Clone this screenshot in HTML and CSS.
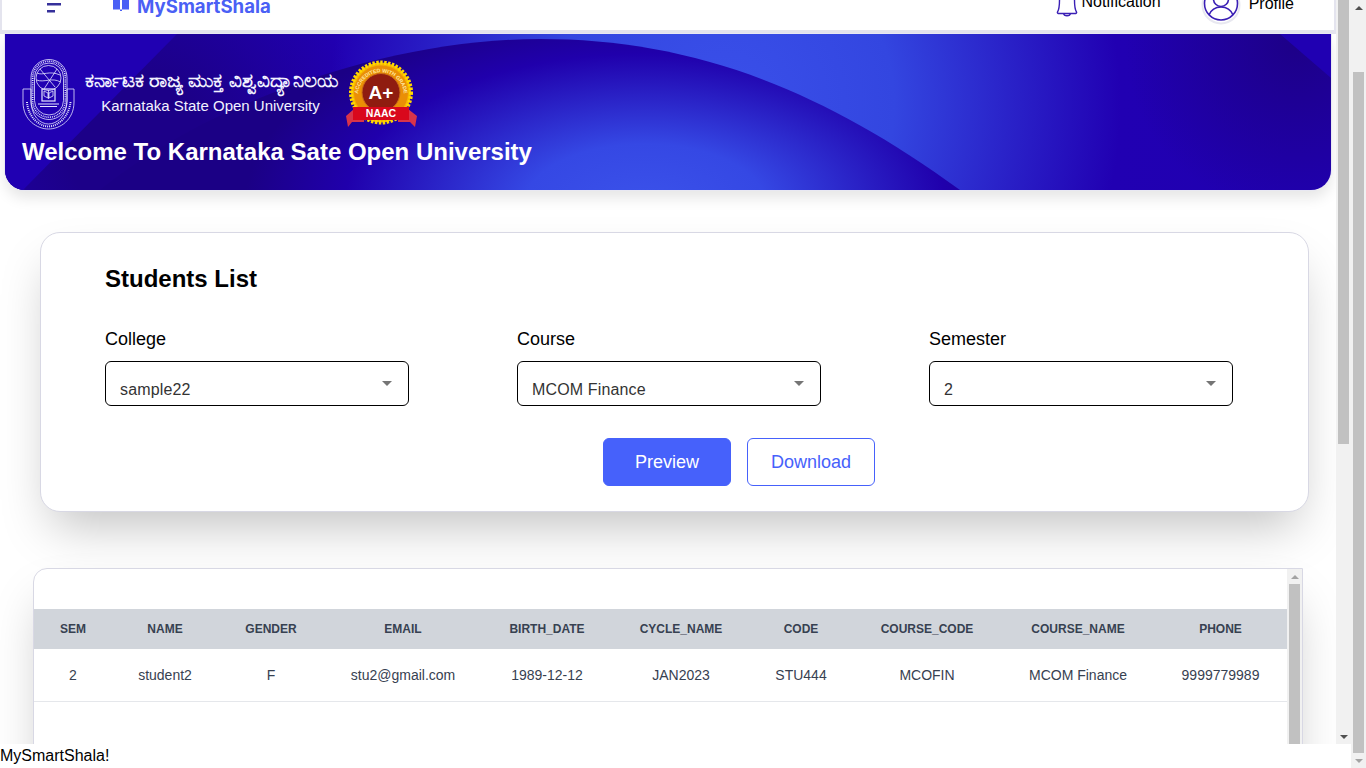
FILE: index.html
```html
<!DOCTYPE html>
<html>
<head>
    <meta charset="utf-8">
    <meta name="viewport" content="width=device-width, initial-scale=1">
    <title>MySmartShala</title>
    <link rel="stylesheet" href="styles.css">
</head>
<body>

<div class="page">
    <div class="main">
        <div class="content">

            <div class="topbar">
                <div class="topbar-left">
                    <svg class="menu-icon" width="14" height="13" viewBox="0 0 14 13">
                        <rect x="0" y="3" width="14" height="2.5" fill="#35309a"/>
                        <rect x="0" y="10" width="8" height="2.5" fill="#35309a"/>
                    </svg>
                    <svg class="book-icon" width="16" height="12" viewBox="0 0 16 12">
                        <path d="M0 0h7v10.500H0zM9 0h7v10.500H9zM7 10.500h2V12H7z" fill="#4a60f5"/>
                    </svg>
                    <span class="brand">MySmartShala</span>
                </div>
                <div class="topbar-right">
                    <svg class="bell-icon" width="22" height="29" viewBox="0 0 22 29">
                        <path d="M11 -6C5 -6 3.500 4 3.500 12C3.500 18 3.500 21 1.500 24C1 25 2 25.500 3 25.500H19C20 25.500 21 25 20.500 24C18.500 21 18.500 18 18.500 12C18.500 4 17 -6 11 -6ZM7.500 25.500C8 28.500 14 28.500 14.500 25.500" stroke="#3a1fb5" stroke-width="1.4" fill="none"/>
                    </svg>
                    <span class="top-link notif">Notification</span>
                    <svg class="user-icon" width="40" height="40" viewBox="0 0 40 40">
                        <circle cx="20" cy="20" r="18.500" fill="#fff" stroke="#e8e8f0" stroke-width="2"/>
                        <circle cx="20" cy="18.500" r="16.500" fill="none" stroke="#3a1fb5" stroke-width="1.6"/>
                        <circle cx="20" cy="14" r="7.500" fill="none" stroke="#3a1fb5" stroke-width="1.6"/>
                        <path d="M8 30C10 25 14 22 20 22C26 22 30 25 32 30" fill="none" stroke="#3a1fb5" stroke-width="1.6"/>
                    </svg>
                    <span class="top-link">Profile</span>
                </div>
            </div>

            <div class="banner">
                <!-- background swirl -->
                <svg class="banner-bg" width="1326" height="156" viewBox="0 0 1326 156" preserveAspectRatio="none">
                    <defs>
                        <radialGradient id="glow" gradientUnits="userSpaceOnUse" cx="720" cy="70" r="565">
                            <stop offset="0" stop-color="#3a50ea"/>
                            <stop offset="0.3" stop-color="#3346e0"/>
                            <stop offset="0.7" stop-color="#2100b2"/>
                            <stop offset="1" stop-color="#2000b0"/>
                        </radialGradient>
                        <radialGradient id="shade-right" gradientUnits="userSpaceOnUse" cx="1290" cy="10" r="170">
                            <stop offset="0" stop-color="#1d0088"/>
                            <stop offset="1" stop-color="#1d0088" stop-opacity="0"/>
                        </radialGradient>
                        <radialGradient id="shade-left" gradientUnits="userSpaceOnUse" cx="130" cy="110" r="230">
                            <stop offset="0.3" stop-color="#1c0088"/>
                            <stop offset="1" stop-color="#1c0088" stop-opacity="0"/>
                        </radialGradient>
                        <radialGradient id="dome" gradientUnits="userSpaceOnUse" cx="0" cy="0" r="400" gradientTransform="translate(640 170) scale(1 0.5)">
                            <stop offset="0" stop-color="#3b52ea"/>
                            <stop offset="0.3" stop-color="#3548e4"/>
                            <stop offset="0.75" stop-color="#2000ac"/>
                            <stop offset="1" stop-color="#1b0085"/>
                        </radialGradient>
                    </defs>
                    <rect width="1326" height="156" fill="url(#glow)"/>
                    <rect width="1326" height="156" fill="url(#shade-right)"/>
                    <rect width="500" height="156" fill="url(#shade-left)"/>
                    <path d="M0 0H172L18 156H0Z" fill="#2000b2"/>
                    <path d="M1275 0H1326V44Z" fill="#2000b2"/>
                    <path d="M95 156C200 70 380 5 535 5C680 5 810 50 955 156Z" fill="url(#dome)"/>
                </svg>

                <div class="logo-row">
                    <svg class="crest" width="53" height="72" viewBox="0 0 53 72">
                        <g fill="none" stroke="#e4e5ff" stroke-width="0.8">
                            <rect x="9" y="1.500" width="36" height="60" rx="18"/>
                            <rect x="12.500" y="5" width="29" height="52" rx="14.500"/>
                            <rect x="10.700" y="3.200" width="32.600" height="56" rx="16.300" stroke-width="1.600" stroke-dasharray="0.9 1"/>
                            <circle cx="26.500" cy="20" r="12.500"/>
                            <path d="M15 15C21 18 27 12 38 17M14.500 22C22 25 30 19 38.500 24M18 11L33 29M35 11L22 31"/>
                            <path d="M1 31H9V42C9 58 18 66 26.500 66C35 66 45 58 45 42V31H52V44C52 62 38 71 26.500 71C15 71 1 62 1 44Z"/>
                            <path d="M5 44C6 58 16 68 26.500 68.500C37 68 47 58 48.500 44" stroke-width="2" stroke-dasharray="1 1"/>
                            <rect x="20" y="31" width="13" height="12" stroke-width="1.200"/>
                            <path d="M26.500 32V41M22 33L26 35V40L22 38ZM31 33L27 35V40L31 38Z"/>
                            <path d="M16 46H37M18 48.500H35" stroke-width="1.200"/>
                        </g>
                    </svg>
                    <div class="logo-text">
                        <div class="logo-kn">ಕರ್ನಾಟಕ ರಾಜ್ಯ ಮುಕ್ತ ವಿಶ್ವವಿದ್ಯಾನಿಲಯ</div>
                        <div class="logo-en">Karnataka State Open University</div>
                    </div>
                    <svg class="naac" width="71" height="67" viewBox="0 0 71 67">
                        <defs>
                            <path id="naac-arc" d="M13 42A23 23 0 1 1 57 42"/>
                        </defs>
                        <path d="M0 56L8 49H18V62L6 62L2 67Z" fill="#d8344a"/>
                        <path d="M71 56L62 49H52V62L64 62L69 67Z" fill="#d8344a"/>
                        <circle cx="35" cy="32.500" r="30" fill="#f6b400" stroke="#ffd800" stroke-width="4" stroke-dasharray="2.400 1.500"/>
                        <circle cx="35" cy="32.500" r="27" fill="#ea8f06"/>
                        <circle cx="35" cy="32.500" r="19" fill="#8f1c10" stroke="#c86a18"/>
                        <text class="naac-arc-text" fill="#ffe9a0"><textPath href="#naac-arc" startOffset="50%" text-anchor="middle">ACCREDITED WITH GRADE</textPath></text>
                        <text class="naac-grade" x="35" y="39" text-anchor="middle" fill="#fff">A+</text>
                        <rect x="7" y="47" width="56" height="13" fill="#d9081c"/>
                        <text class="naac-name" x="35" y="57" text-anchor="middle" fill="#fff">NAAC</text>
                    </svg>
                </div>
                <h1 class="welcome">Welcome To Karnataka Sate Open University</h1>
            </div>

            <div class="filter-card">
                <h2 class="card-title">Students List</h2>
                <div class="filters">
                    <div class="field">
                        <label class="field-label">College</label>
                        <div class="select-box"><span>sample22</span><i class="caret"></i></div>
                    </div>
                    <div class="field">
                        <label class="field-label">Course</label>
                        <div class="select-box"><span>MCOM Finance</span><i class="caret"></i></div>
                    </div>
                    <div class="field">
                        <label class="field-label">Semester</label>
                        <div class="select-box"><span>2</span><i class="caret"></i></div>
                    </div>
                </div>
                <div class="actions">
                    <button class="btn btn-primary">Preview</button>
                    <button class="btn btn-outline">Download</button>
                </div>
            </div>

            <div class="table-card">
                <div class="table-wrap">
                    <table>
                        <colgroup>
                            <col class="c-sem"><col class="c-name"><col class="c-gender"><col class="c-email"><col class="c-birth">
                            <col class="c-cycle"><col class="c-code"><col class="c-ccode"><col class="c-cname"><col class="c-phone">
                        </colgroup>
                        <thead>
                            <tr>
                                <th>SEM</th><th>NAME</th><th>GENDER</th><th>EMAIL</th><th>BIRTH_DATE</th>
                                <th>CYCLE_NAME</th><th>CODE</th><th>COURSE_CODE</th><th>COURSE_NAME</th><th>PHONE</th>
                            </tr>
                        </thead>
                        <tbody>
                            <tr>
                                <td>2</td><td>student2</td><td>F</td><td>stu2@gmail.com</td><td>1989-12-12</td>
                                <td>JAN2023</td><td>STU444</td><td>MCOFIN</td><td>MCOM Finance</td><td>9999779989</td>
                            </tr>
                        </tbody>
                    </table>
                </div>
                <div class="sb sb-table">
                    <div class="sb-btn"><i class="arrow-up off"></i></div>
                    <div class="thumb thumb-fill"></div>
                </div>
            </div>

        </div>

        <div class="sb sb-inner">
            <div class="thumb thumb-inner"></div>
            <div class="sb-space"></div>
            <div class="sb-btn"><i class="arrow-down"></i></div>
        </div>
    </div>

    <div class="footer">MySmartShala!</div>
</div>

<div class="sb sb-outer">
    <div class="sb-btn"><i class="arrow-up"></i></div>
    <div class="thumb thumb-outer"></div>
    <div class="sb-btn"><i class="arrow-down off"></i></div>
</div>

</body>
</html>
```

FILE: styles.css
```css
* {
    box-sizing: border-box;
}

body {
    margin: 0;
    height: 100vh;
    overflow: hidden;
    display: flex;
    background-color: #fff;
    font-family: "Liberation Sans", Arial, sans-serif;
    color: #000;
}

.page {
    width: 1351px;
    display: flex;
    flex-direction: column;
}

.main {
    height: 744px;
    display: flex;
    overflow: hidden;
}

.content {
    width: 1336px;
    overflow: hidden;
}

.footer {
    height: 24px;
    font-size: 16px;
    line-height: 23px;
    background-color: #fff;
}

/* fake browser scrollbars */
.sb {
    width: 15px;
    flex: none;
    display: flex;
    flex-direction: column;
    align-items: center;
    background-color: #f1f1f1;
}

.sb-btn {
    width: 15px;
    height: 15px;
    flex: none;
    display: flex;
    justify-content: center;
    align-items: center;
}

.sb-space {
    flex: 1;
}

.thumb {
    width: 11px;
    background-color: #c1c1c1;
}

.thumb-inner {
    height: 444px;
}

.thumb-outer {
    height: 681px;
    margin-top: 57px;
}

.thumb-fill {
    flex: 1;
}

.arrow-up,
.arrow-down {
    width: 0;
    height: 0;
    border-left: 4px solid transparent;
    border-right: 4px solid transparent;
}

.arrow-up {
    border-bottom: 4px solid #505050;
}

.arrow-down {
    border-top: 4px solid #505050;
}

.arrow-up.off {
    border-bottom-color: #a3a3a3;
}

.arrow-down.off {
    border-top-color: #a3a3a3;
}

/* top bar, cut off by the page scroll */
.topbar {
    height: 34px;
    display: flex;
    justify-content: space-between;
    align-items: flex-end;
    overflow: hidden;
    background-color: #fff;
    border-left: 2px solid #e4e4ee;
    border-right: 2px solid #e4e4ee;
    border-bottom: 4px solid #e4e4ee;
}

.topbar-left,
.topbar-right {
    display: flex;
    align-items: flex-end;
}

.topbar-left {
    padding-left: 45px;
}

.topbar-right {
    padding-right: 40px;
}

.menu-icon {
    margin-bottom: 17px;
}

.book-icon {
    margin-left: 52px;
    margin-bottom: 19px;
}

.brand {
    margin-left: 8px;
    margin-bottom: 14px;
    font-family: Inter, sans-serif;
    font-size: 18.6px;
    line-height: 20px;
    font-weight: 700;
    color: #4a60f5;
}

.bell-icon {
    margin-bottom: 13px;
}

.top-link {
    font-size: 16px;
    line-height: 18px;
    margin-left: 8px;
    margin-bottom: 17px;
}

.notif {
    margin-left: 3px;
    margin-bottom: 19px;
}

.user-icon {
    margin-left: 40px;
    margin-bottom: 5px;
}

/* banner */
.banner {
    position: relative;
    height: 156px;
    margin: 0 5px;
    padding: 24px 0 0 17px;
    overflow: hidden;
    color: #fff;
    border-radius: 0 0 20px 20px;
    box-shadow: 0 0 0 1px #e8e8f2, 0 8px 14px rgba(0, 0, 0, 0.1);
}

.banner-bg {
    position: absolute;
    top: 0;
    left: 0;
}

.logo-row {
    position: relative;
    display: flex;
    align-items: flex-start;
    height: 72px;
}

.logo-text {
    width: 253px;
    margin-left: 10px;
    text-align: center;
    color: #f2f2ff;
}

.logo-kn {
    margin-top: 7px;
    font-family: "Noto Sans", sans-serif;
    font-size: 19.8px;
    line-height: 30px;
    font-weight: 700;
    white-space: nowrap;
}

.logo-en {
    margin: 2px 2px 0 0;
    font-size: 15px;
    line-height: 18px;
}

.naac {
    margin-left: 8px;
    margin-top: 2px;
}

.naac-arc-text {
    font-family: "Liberation Sans", sans-serif;
    font-size: 5.2px;
    font-weight: 700;
}

.naac-grade {
    font-family: "Liberation Sans", sans-serif;
    font-size: 19px;
    font-weight: 700;
}

.naac-name {
    font-family: "Liberation Sans", sans-serif;
    font-size: 10.5px;
    font-weight: 700;
}

.welcome {
    position: relative;
    margin: 8px 0 0;
    font-size: 24px;
    line-height: 28px;
    font-weight: 700;
}

/* filter card */
.filter-card {
    width: 1269px;
    height: 280px;
    margin: 42px 0 0 40px;
    padding: 32px 64px 0;
    background-color: #fff;
    border: 1px solid #d8d8e4;
    border-radius: 20px;
    box-shadow: 0 25px 50px -12px rgba(0, 0, 0, 0.25);
}

.card-title {
    margin: 0;
    font-size: 24px;
    line-height: 28px;
    font-weight: 700;
}

.filters {
    display: flex;
    gap: 108px;
    margin-top: 36px;
}

.field {
    width: 304px;
}

.field-label {
    display: block;
    font-size: 18px;
    line-height: 21px;
    margin-bottom: 11px;
}

.select-box {
    height: 45px;
    display: flex;
    justify-content: space-between;
    padding: 19px 16px 0 14px;
    font-size: 16px;
    line-height: 18px;
    letter-spacing: 0.15px;
    color: #333;
    border: 1px solid #000;
    border-radius: 6px;
}

.caret {
    width: 0;
    height: 0;
    border-left: 5px solid transparent;
    border-right: 5px solid transparent;
    border-top: 5px solid #757575;
}

.actions {
    display: flex;
    gap: 16px;
    margin-top: 32px;
    padding-left: 498px;
}

.btn {
    width: 128px;
    height: 48px;
    padding: 0;
    font-family: inherit;
    font-size: 18px;
    border-radius: 6px;
    border: 1px solid #4661fb;
    cursor: pointer;
}

.btn-primary {
    background-color: #4661fb;
    color: #fff;
}

.btn-outline {
    background-color: #fff;
    color: #4661fb;
}

/* students table */
.table-card {
    width: 1270px;
    height: 500px;
    margin: 56px 0 0 33px;
    display: flex;
    background-color: #fff;
    border: 1px solid #d8d8e4;
    border-radius: 14px 0 0 14px;
    box-shadow: 0 25px 50px -12px rgba(0, 0, 0, 0.25);
    overflow: hidden;
}

.table-wrap {
    flex: 1;
    padding-top: 40px;
}

table {
    width: 1253px;
    table-layout: fixed;
    border-collapse: collapse;
    text-align: center;
    color: #374151;
}

th {
    height: 40px;
    padding: 0;
    font-size: 12px;
    font-weight: 700;
    background-color: #d1d5db;
}

td {
    height: 52px;
    padding: 0;
    font-size: 14px;
    border-bottom: 1px solid #e5e7eb;
}

.c-sem { width: 78px; }
.c-name { width: 106px; }
.c-gender { width: 106px; }
.c-email { width: 158px; }
.c-birth { width: 130px; }
.c-cycle { width: 138px; }
.c-code { width: 102px; }
.c-ccode { width: 150px; }
.c-cname { width: 152px; }
.c-phone { width: 133px; }
```
